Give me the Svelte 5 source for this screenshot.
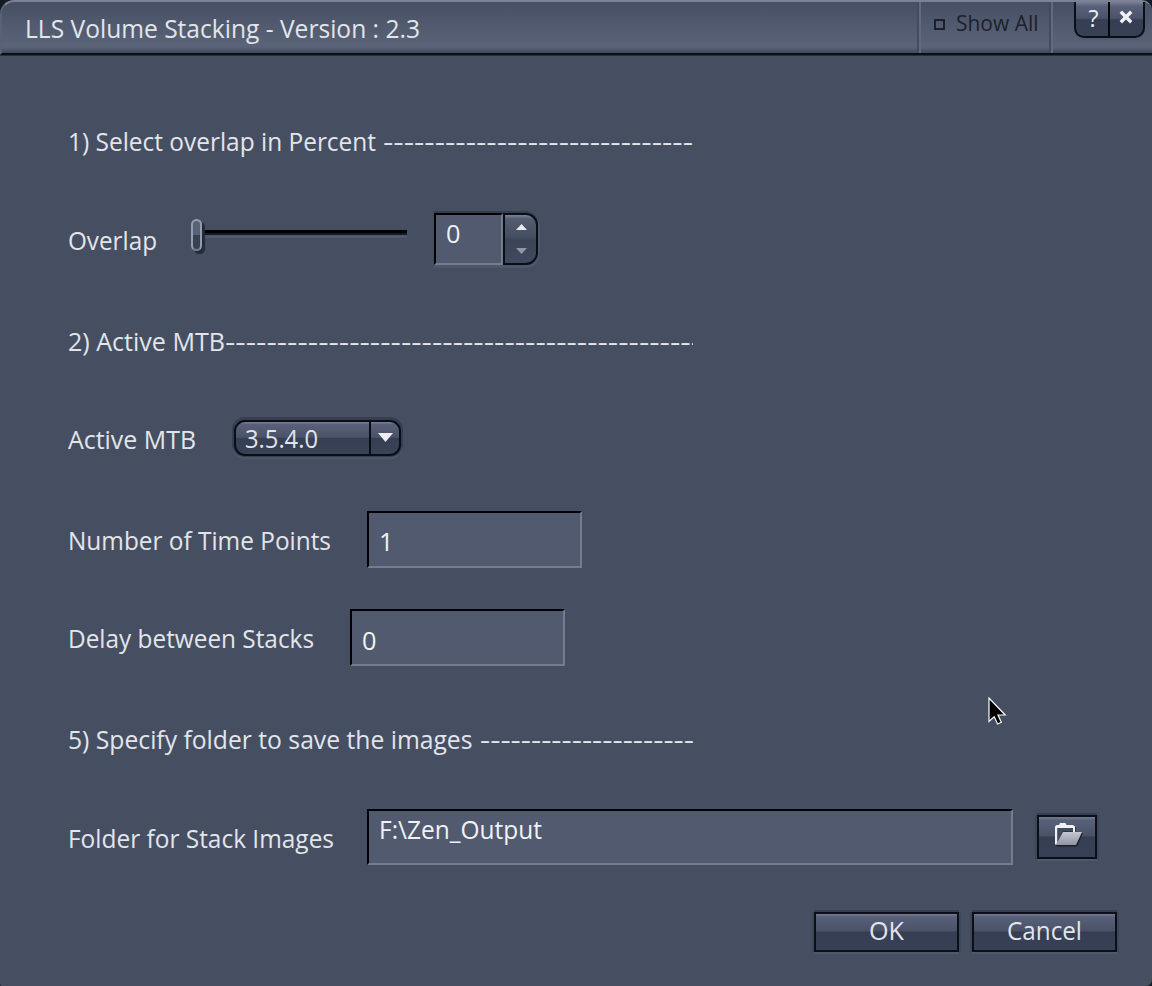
<script>
  let overlap = $state(0);
  let timePoints = $state('1');
  let delay = $state('0');
  let folder = $state('F:\\Zen_Output');

  const dashes = (n) => '-'.repeat(n);

  // Condenses or stretches a run of text to a given width.
  function fit(node, width) {
    const natural = node.getBoundingClientRect().width;
    node.style.transform = `scaleX(${width / natural})`;
    node.style.marginRight = `${width - natural}px`;
  }
</script>

<div class="window">
  <header class="titlebar">
    <h1><span class="t" use:fit={395}>LLS Volume Stacking - Version : 2.3</span></h1>
    <div class="show-all">
      <i class="box"></i><span class="t" use:fit={82.5}>Show All</span>
    </div>
    <div class="corner">
      <div class="winbtns">
        <button class="help" aria-label="Help">?</button>
        <button aria-label="Close">
          <svg width="14" height="14" viewBox="0 0 14 14"><path d="M1.8 1.8 L12.2 12.2 M12.2 1.8 L1.8 12.2" stroke="#f1f2f5" stroke-width="3.4" /></svg>
        </button>
      </div>
    </div>
  </header>

  <main>
    <div class="row heading up">
      <span class="t" use:fit={308}>1) Select overlap in Percent</span>
      <span class="t d" style="margin-left:7px" use:fit={310}>{dashes(30)}</span>
    </div>

    <div class="row up">
      <span class="label" style="width:123px"><span class="t" use:fit={89}>Overlap</span></span>
      <div class="slider"><i class="thumb"></i><i class="track"></i></div>
      <div class="spinner">
        <div class="value"><span class="t" use:fit={14.5}>{overlap}</span></div>
        <div class="arrows">
          <svg width="11" height="6" viewBox="0 0 11 6"><path d="M5.5 0 L11 6 H0z" fill="#e8eaef" /></svg>
          <svg width="11" height="6" viewBox="0 0 11 6"><path d="M0 0 H11 L5.5 6z" fill="#9297a8" /></svg>
        </div>
      </div>
    </div>

    <div class="row heading clip up">
      <span class="t" use:fit={157}>2) Active MTB</span>
      <span class="t d" use:fit={476}>{dashes(46)}</span>
    </div>

    <div class="row">
      <span class="label" style="width:166px"><span class="t" use:fit={128}>Active MTB</span></span>
      <div class="combo">
        <div class="chosen"><span class="t" use:fit={73}>3.5.4.0</span></div>
        <div class="drop"><svg width="15" height="9" viewBox="0 0 15 9"><path d="M0 0 H15 L7.5 9z" fill="#eceef2" /></svg></div>
      </div>
    </div>

    <div class="row">
      <span class="label" style="width:299px"><span class="t" use:fit={263}>Number of Time Points</span></span>
      <div class="field first"><span class="t" use:fit={14.5}>{timePoints}</span></div>
    </div>

    <div class="row up">
      <span class="label" style="width:282px"><span class="t" use:fit={246}>Delay between Stacks</span></span>
      <div class="field second"><span class="t" use:fit={14.5}>{delay}</span></div>
    </div>

    <div class="row heading">
      <span class="t" use:fit={404.5}>5) Specify folder to save the images</span>
      <span class="t d" style="margin-left:7.5px" use:fit={214}>{dashes(21)}</span>
    </div>

    <div class="row up">
      <span class="label" style="width:299px"><span class="t" use:fit={266}>Folder for Stack Images</span></span>
      <div class="field path"><span class="t" use:fit={163}>{folder}</span></div>
      <button class="btn browse" aria-label="Browse">
        <svg width="30" height="26" viewBox="0 0 30 26">
          <defs>
            <linearGradient id="flap" x1="0" y1="0" x2="0" y2="1">
              <stop offset="0" stop-color="#c5c8d2" /><stop offset="1" stop-color="#8f94a3" />
            </linearGradient>
          </defs>
          <path d="M2.500 24.500V5h19v6h7.500l-6 13.500z" fill="#1b202c" />
          <path d="M1 22.500V4.500L2.500 3H5L6 1h5.500l1 2h6.500L21 4.500V10h-2V6H3.500V22.500z" fill="#f0f1f4" />
          <path d="M3.500 6H19V9.500H9L3.500 20z" fill="#414a5f" />
          <path d="M9 10H28L22 23H2V22.500z" fill="url(#flap)" />
        </svg>
      </button>
    </div>
  </main>

  <footer>
    <button class="btn"><span class="t" use:fit={35}>OK</span></button>
    <button class="btn"><span class="t" use:fit={75}>Cancel</span></button>
  </footer>

  <svg class="cursor" width="19" height="29" viewBox="0 0 19 29">
    <path d="M1 1 V24.500 L6.200 19.800 L9.600 27 L13.300 25.300 L10 18 H17.200z" fill="#000" stroke="#fff" stroke-width="1.200" />
  </svg>
</div>

<style>
  :global(body) { background: #151922; }

  .window {
    position: relative;
    display: flex;
    flex-direction: column;
    box-sizing: border-box;
    width: 1152px;
    height: 986px;
    overflow: hidden;
    background: #464e62;
    border-radius: 14px 10px 6px 2px;
    color: #e2e5ea;
    font: 24.7px/34px "Open Sans", "Noto Sans", sans-serif;
  }

  .t { display: inline-block; flex: none; white-space: pre; transform-origin: 0 50%; }
  button { padding: 0; border: 0; background: none; color: inherit; font: inherit; }
  svg { display: block; }
  i { display: block; }

  .titlebar {
    display: flex;
    box-sizing: border-box;
    height: 55px;
    flex: none;
    border-top: 2px solid #7b8296;
    border-left: 2px solid #596176;
    border-bottom: 2px solid #0c0f16;
    border-radius: 14px 10px 0 0;
    background: linear-gradient(#474f64, #5b6378 86%, #596176 90%, #3f475b);
    box-shadow: 0 1px #282e3c;
  }
  h1 { flex: 1; margin: 0; padding: 10px 0 0 23px; font: inherit; }
  .show-all {
    display: flex;
    box-sizing: border-box;
    width: 134px;
    padding: 3px 0 0 15px;
    border-left: 2px solid #434b60;
    border-right: 2px solid #434b60;
    box-shadow: inset 2px 0 #626a7f, 2px 0 #626a7f;
    color: #1b212e;
    font-size: 22px;
  }
  .box { box-sizing: border-box; width: 11px; height: 11px; margin: 14px 11px 0 0; border: 2px solid #1a202c; }
  .corner { width: 101px; padding-left: 23px; box-sizing: border-box; }
  .winbtns {
    display: flex;
    box-sizing: border-box;
    width: 71px;
    height: 36px;
    border: solid #0b0e15;
    border-width: 0 2px 2px;
    border-radius: 0 0 10px 10px;
    background: linear-gradient(#7a8195, #59617a 12%, #4b536a 48%, #363e54 52%, #384056);
    box-shadow: 0 2px 1px #535b70;
    overflow: hidden;
  }
  .winbtns button { flex: 1; display: flex; justify-content: center; padding: 8px 2px 0 0; color: #eef0f4; }
  .winbtns .help { flex: none; box-sizing: border-box; width: 34px; border-right: 2px solid #05070b; padding: 0 0 0 3px; line-height: 32px; font-size: 23px; }

  main {
    display: grid;
    grid-template-rows: 99px 101px 97px 101px 99px 100px 100px 100px;
    padding: 38px 0 0 68px;
  }
  .row { display: flex; align-items: flex-start; }
  .heading { width: 625px; }
  .clip { overflow: hidden; }
  .heading .t, .label { margin-top: 33px; }
  .up > .t, .up > .label { margin-top: 32px; }
  .label { flex: none; }

  .slider { display: flex; width: 216px; margin: 27px 27px 0 0; }
  .thumb {
    box-sizing: border-box;
    width: 11px;
    height: 32px;
    border: 2px solid #969cab;
    border-bottom-color: #747b8e;
    border-radius: 6px;
    background: linear-gradient(#596177 50%, #384056 50%);
    box-shadow: 3px 3px 1px #242a37;
    z-index: 1;
  }
  .track { flex: 1; height: 3px; margin-top: 11px; background: #000; border-bottom: 2px solid #151922; box-shadow: 0 3px #50586d; }

  .spinner { display: flex; width: 104px; height: 52px; margin-top: 21px; border-radius: 0 13px 13px 0; box-shadow: 0 -2px #353d50, 1px 2px 0 1px #4f576c; }
  .value {
    box-sizing: border-box;
    width: 69px;
    padding: 2px 0 0 10px;
    border: 2px solid #000;
    border-right-color: #747c90;
    border-bottom-color: #747c90;
    background: #525a6f;
    color: #f0f2f5;
  }
  .arrows {
    box-sizing: border-box;
    width: 35px;
    padding: 9px 0 9px 11px;
    display: flex;
    flex-direction: column;
    justify-content: space-between;
    border: 2px solid #0a0d14;
    border-radius: 0 12px 12px 0;
    background: linear-gradient(#7b8296, #545c72 8%, #464e64 45%, #3b4359 52%, #41495f);
  }

  .combo {
    display: flex;
    box-sizing: border-box;
    width: 167px;
    height: 36px;
    margin-top: 30px;
    border: 2px solid #0a0d14;
    border-radius: 11px;
    background: linear-gradient(#7b8296, #59617a 8%, #4a5268 48%, #363e54 50%, #3a4258);
    box-shadow: 0 -1px 0 2px #363e51, 0 1px 0 2px #4e566b;
  }
  .chosen { width: 135px; box-sizing: border-box; padding-left: 9px; border-right: 2px solid #0a0d14; line-height: 34px; }
  .drop { padding: 11px 0 0 7px; }

  .field {
    box-sizing: border-box;
    width: 215px;
    height: 57px;
    margin-top: 20px;
    padding: 13px 0 0 10px;
    border: 2px solid #000;
    border-right-color: #747c90;
    border-bottom-color: #747c90;
    background: #525a6f;
    color: #f0f2f5;
  }
  .field.first { padding-top: 12px; }
  .field.second { margin-top: 19px; }
  .field.path { width: 646px; height: 56px; margin-top: 19px; padding-top: 2px; }

  .btn {
    display: flex;
    align-items: center;
    justify-content: center;
    box-sizing: border-box;
    width: 145px;
    height: 40px;
    border: 2px solid #0c0f17;
    background: linear-gradient(#747b8f, #59617a 8%, #4a5268 47%, #363e54 50%, #384056);
    box-shadow: 0 -2px 0 #363e51, 2px 0 0 #3e465a, -2px 0 0 #3e465a, 0 2px 0 #50586d;
  }
  .browse { width: 60px; height: 44px; margin: 25px 0 0 24px; padding: 0 0 4px 3px; }
  footer { display: flex; gap: 13px; margin: 22px 0 0 814px; }
  footer .btn { padding-bottom: 3px; }

  .cursor { position: absolute; left: 987.5px; top: 697px; }
</style>
